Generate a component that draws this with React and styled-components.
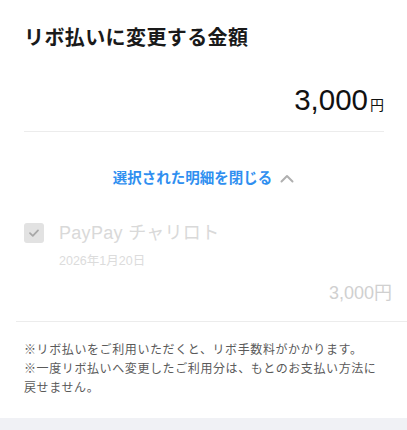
import React from "react";
import styled, { createGlobalStyle } from "styled-components";

const Global = createGlobalStyle`
  html, body { margin: 0; padding: 0; background: #fff; }
  body {
    font-family: "Helvetica Neue", Arial, "Liberation Sans", "Noto Sans CJK JP", sans-serif;
    -webkit-font-smoothing: antialiased;
  }
`;

const Page = styled.div`
  width: 407px;
  height: 430px;
  overflow: hidden;
  display: flex;
  flex-direction: column;
  background: #fff;
`;

const Summary = styled.section`
  padding: 0 23px 0 24px;
`;

const Title = styled.h1`
  margin: 0;
  padding-top: 27px;
  font-size: 20px;
  line-height: 22px;
  font-weight: 700;
  color: #1a1a1a;
  letter-spacing: 0.4px;
`;

const TotalRow = styled.div`
  display: flex;
  justify-content: flex-end;
  align-items: baseline;
  margin-top: 35px;
  padding-bottom: 10px;
  border-bottom: 1px solid #ececec;
`;

const TotalValue = styled.span`
  font-family: "Liberation Sans", "Noto Sans CJK JP", sans-serif;
  font-size: 29.5px;
  line-height: 32px;
  font-weight: 400;
  color: #111;
`;

const Yen = styled.span`
  font-size: ${(p) => p.$size}px;
  margin-left: ${(p) => p.$gap}px;
  color: inherit;
`;

const ToggleButton = styled.button`
  align-self: center;
  display: flex;
  align-items: center;
  gap: 8px;
  margin-top: 36px;
  padding: 0;
  border: none;
  background: none;
  font-family: inherit;
  font-size: 14.5px;
  line-height: 20px;
  font-weight: 700;
  color: #2f8ff0;
  cursor: pointer;
`;

const Item = styled.div`
  display: grid;
  grid-template-columns: 20px 1fr;
  column-gap: 15px;
  margin-top: 34px;
  padding: 0 15px 0 24px;
  align-items: center;
`;

const Check = styled.span`
  width: 20px;
  height: 20px;
  border-radius: 3px;
  background: #e2e2e2;
  display: flex;
  align-items: center;
  justify-content: center;
`;

const ItemName = styled.div`
  font-size: 18px;
  line-height: 22px;
  color: #d9d9d9;
  letter-spacing: 0.3px;
`;

const ItemDate = styled.div`
  grid-column: 2;
  margin-top: 10px;
  font-size: 12.5px;
  line-height: 14px;
  color: #dcdcdc;
`;

const ItemAmount = styled.div`
  grid-column: 1 / -1;
  justify-self: end;
  margin-top: 15px;
  font-family: "Liberation Sans", "Noto Sans CJK JP", sans-serif;
  font-size: 18px;
  line-height: 20px;
  color: #d0d0d0;
`;

const Notes = styled.div`
  margin-top: 18px;
  margin-left: 16px;
  border-top: 1px solid #ececec;
  padding: 19px 24px 0 8px;
  font-size: 12px;
  line-height: 19px;
  color: #5a5a5a;
  letter-spacing: 0.6px;
`;

const Note = styled.p`
  margin: 0;
`;

const Footer = styled.div`
  margin-top: auto;
  height: 12px;
  background: #f0f1f5;
`;

export default function App() {
  return (
    <Page>
      <Global />
      <Summary>
        <Title>リボ払いに変更する金額</Title>
        <TotalRow>
          <TotalValue>
            3,000<Yen $size={14} $gap={2}>円</Yen>
          </TotalValue>
        </TotalRow>
      </Summary>
      <ToggleButton>
        選択された明細を閉じる
        <svg width="14" height="9" viewBox="0 0 14 9" fill="none">
          <path d="M1.5 7.5L7 2l5.5 5.5" stroke="#b0b0b0" strokeWidth="2" strokeLinecap="round" strokeLinejoin="round" />
        </svg>
      </ToggleButton>
      <Item>
        <Check>
          <svg width="12" height="10" viewBox="0 0 12 10" fill="none">
            <path d="M2 5.2l2.8 2.6L10 2.4" stroke="#a8a8a8" strokeWidth="1.8" strokeLinecap="round" strokeLinejoin="round" />
          </svg>
        </Check>
        <ItemName>PayPay チャリロト</ItemName>
        <ItemDate>2026年1月20日</ItemDate>
        <ItemAmount>3,000円</ItemAmount>
      </Item>
      <Notes>
        <Note>※リボ払いをご利用いただくと、リボ手数料がかかります。</Note>
        <Note>※一度リボ払いへ変更したご利用分は、もとのお支払い方法に戻せません。</Note>
      </Notes>
      <Footer />
    </Page>
  );
}
